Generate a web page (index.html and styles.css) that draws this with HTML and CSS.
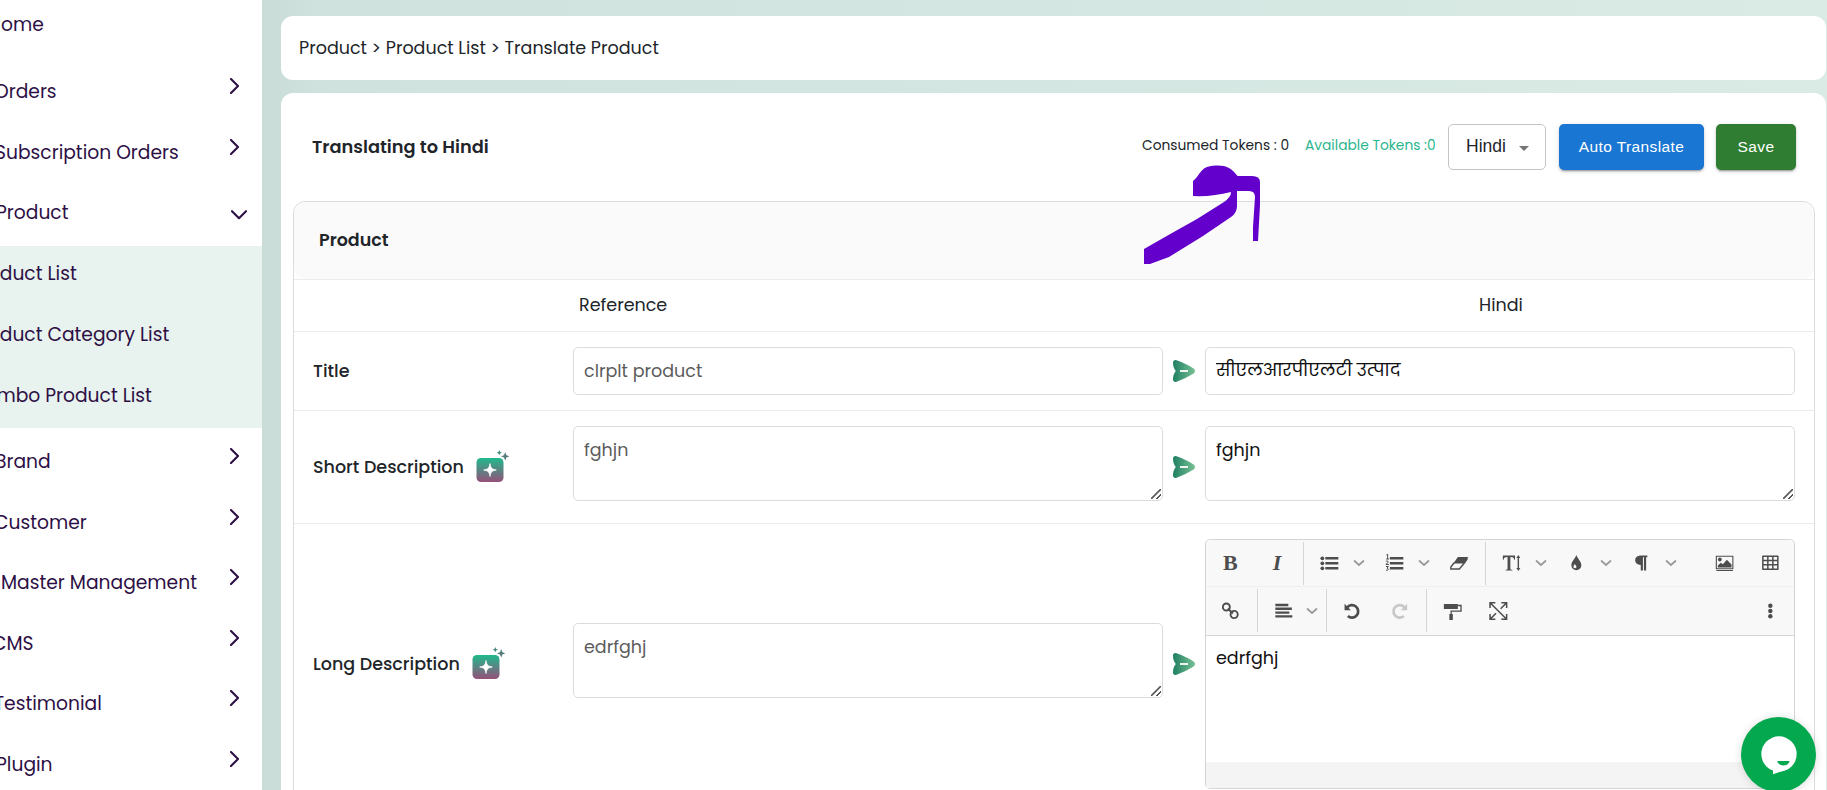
FILE: index.html
```html
<!DOCTYPE html>
<html lang="en">
<head>
  <meta charset="UTF-8" />
  <meta name="viewport" content="width=device-width, initial-scale=1" />
  <title>Translate Product</title>
  <link rel="stylesheet" href="styles.css">
</head>
<body>
  <!-- shared icons -->
  <svg class="sprite" width="0" height="0">
    <defs>
      <linearGradient id="sendFill" x1="0" y1="0" x2="1" y2="0">
        <stop offset="0" stop-color="#1f7f62" /><stop offset="1" stop-color="#78c195" />
      </linearGradient>
      <linearGradient id="aiFill" x1="0" y1="0" x2="0" y2="1">
        <stop offset="0" stop-color="#1fb98c" /><stop offset="1" stop-color="#95507a" />
      </linearGradient>
    </defs>
    <symbol id="right" viewBox="0 0 10 16"><path d="M1 1l7 7-7 7" fill="none" stroke="#2d0f45" stroke-width="2.1" stroke-linecap="round" stroke-linejoin="round" /></symbol>
    <symbol id="down" viewBox="0 0 16 10"><path d="M1 1.2l7 7 7-7" fill="none" stroke="#2d0f45" stroke-width="2.1" stroke-linecap="round" stroke-linejoin="round" /></symbol>
    <symbol id="caret" viewBox="0 0 12 8"><path d="M1 1.5l5 4.5 5-4.5" fill="none" stroke="#999" stroke-width="1.7" /></symbol>
    <symbol id="send" viewBox="0 0 22 22">
      <path d="M0 2.5C0 .6 1.6-.3 3.6.3 9 2.2 15 5 20.2 8.2c2.4 1.5 2.4 4.1 0 5.6C15 17 9 19.800 3.600 21.700 1.600 22.300 0 21.400 0 19.500 0 16.500.7 13.500 2.800 11 .7 8.500 0 5.500 0 2.500z" fill="url(#sendFill)" />
      <path d="M7 11h8" stroke="#fff" stroke-width="1.8" />
    </symbol>
    <symbol id="ai" viewBox="0 0 34 32">
      <rect x="0.5" y="8" width="27" height="24" rx="4.500" fill="url(#aiFill)" />
      <path d="M14 13.500c.8 4.500 1.600 5.500 6.300 6.500-4.700 1-5.500 2-6.300 6.500-.8-4.500-1.600-5.500-6.300-6.500 4.700-1 5.500-2 6.300-6.500z" fill="#fff" stroke="#fff" stroke-width=".7" />
      <path d="M23.300 0l.8 1.900 1.900.7-1.900.8-.8 1.900-.8-1.900-1.900-.8 1.900-.7z" fill="#41877a" />
      <path d="M29.200 2l1.200 3.300 3 1-3 1.100-1.200 3-1.200-3-3-1.100 3-1z" fill="#527d7a" />
    </symbol>
    <symbol id="ul" viewBox="0 0 24 24">
      <path d="M8 6h13v2.500H8zM8 11h13v2.500H8zM8 16h13v2.500H8z" />
      <circle cx="5" cy="7.300" r="1.900" /><circle cx="5" cy="12.300" r="1.900" /><circle cx="5" cy="17.300" r="1.900" />
    </symbol>
    <symbol id="ol" viewBox="0 0 24 24">
      <path d="M7.500 6h13.500v2.500H7.500zM7.500 11h13.500v2.500H7.500zM7.500 16h13.500v2.500H7.500z" />
      <path d="M4 4l1.300-.7V8M3.800 8h2.900M3.500 10.300c1-.6 2.500-.3 2.300.8L3.700 13.500h2.800M3.700 15.500h2.300l-1.300 1.700c2 0 1.600 2.700-1 2" fill="none" stroke="#4d4d4d" stroke-width="1" />
    </symbol>
    <symbol id="eraser" viewBox="0 0 24 24">
      <path d="M10.500 6H21l-4.500 6.500H6z" /><path d="M6.800 11.800L3.500 16v2H12l5-6M20 7.500l-3 4.500" fill="none" stroke="#4d4d4d" stroke-width="1.400" />
    </symbol>
    <symbol id="fontsize" viewBox="0 0 24 24">
      <path d="M3.500 4.500h12.200v4.200h-.8c-.4-2-1-2.700-3.900-2.700v11.400c0 1 .5 1.300 2 1.300v.8H6.200v-.8c1.500 0 2-.3 2-1.300V6C5.300 6 4.700 6.700 4.300 8.700h-.8z" />
      <path d="M19 6v12" stroke="#4d4d4d" stroke-width="1.400" /><path d="M19 4l2 3h-4zM19 20l2-3h-4z" />
    </symbol>
    <symbol id="drop" viewBox="0 0 24 24"><path fill-rule="evenodd" d="M12 4c1 3.500 5 6.300 5 10.300a5 4.900 0 0 1-10 0C7 10.300 11 7.500 12 4zm-1.500 9c-.7 1-1.400 1.800-1.400 2.700a1.500 1.500 0 0 0 3 0c0-.9-1.100-1.700-1.600-2.700z" /></symbol>
    <symbol id="para" viewBox="0 0 24 24"><path d="M18 4.500v1.700h-1.200V19.500h-2.200V6.200h-1V19.500h-2.200V14C4 14 4 4.500 11 4.500z" /></symbol>
    <symbol id="image" viewBox="0 0 24 24">
      <path d="M4 5.200h16.500v12.600H4zM4 19.500h16.500" fill="none" stroke="#4d4d4d" stroke-width="1.100" />
      <circle cx="7.500" cy="8.500" r="1.900" /><path d="M5.500 16.500v-2l3-2.800 2 1.500 4-4.500 4.700 4.800v3z" />
    </symbol>
    <symbol id="table" viewBox="0 0 24 24"><path d="M4.500 5.200h15v13h-15zM4.500 9.500h15M4.500 13.800h15M9.500 5.200v13M14.500 5.200v13" fill="none" stroke="#4d4d4d" stroke-width="1.500" stroke-linejoin="round" /></symbol>
    <symbol id="link" viewBox="0 0 24 24"><path d="M9.500 9.500l5 5" stroke="#4d4d4d" stroke-width="2" /><g fill="none" stroke="#4d4d4d" stroke-width="1.900"><circle cx="8" cy="8" r="3.500" /><circle cx="15.800" cy="15.500" r="3.600" /></g></symbol>
    <symbol id="align" viewBox="0 0 24 24"><path d="M4 4.800h13v2.400H4zM4 8.600h16.500v2.400H4zM4 12.400h14v2.400H4zM4 16.200h17v2.400H4z" /></symbol>
    <symbol id="undo" viewBox="0 0 24 24"><path d="M6.700 8.600a6.200 6.200 0 1 1 .8 8.400" fill="none" stroke="currentColor" stroke-width="2.700" /><path d="M4.200 4.800v6.400h6.400z" fill="currentColor" /></symbol>
    <symbol id="roller" viewBox="0 0 24 24"><path d="M3.500 5h14v5h-14zM9 15h3.500v6H9z" /><path d="M17.500 6.500h3.200v5.700H10.800V16" fill="none" stroke="#4d4d4d" stroke-width="1.300" /></symbol>
    <symbol id="full" viewBox="0 0 24 24"><path d="M3.700 9V3.700H9M15 3.700h5.300V9M20.300 15v5.300H15M9 20.300H3.700V15M3.700 3.700l16.600 16.600M20.300 3.700l-6 6M9.700 14.300l-6 6" fill="none" stroke="#4d4d4d" stroke-width="1.500" /></symbol>
    <symbol id="dots" viewBox="0 0 24 24"><circle cx="12" cy="6.700" r="2.200" /><circle cx="12" cy="12" r="2.200" /><circle cx="12" cy="17.300" r="2.200" /></symbol>
  </svg>

  <div class="layout">
    <aside class="sidebar">
      <a class="item home"><span class="t-home">Home</span></a>
      <a class="item"><span class="t-orders">Orders</span><svg class="chev"><use href="#right" /></svg></a>
      <a class="item"><span class="t-subs">Subscription Orders</span><svg class="chev"><use href="#right" /></svg></a>
      <a class="item"><span class="t-product">Product</span><svg class="chev-down"><use href="#down" /></svg></a>
      <div class="submenu">
        <a class="item"><span class="t-list">Product List</span></a>
        <a class="item"><span class="t-list">Product Category List</span></a>
        <a class="item"><span class="t-list">Combo Product List</span></a>
      </div>
      <a class="item"><span class="t-brand">Brand</span><svg class="chev"><use href="#right" /></svg></a>
      <a class="item"><span class="t-customer">Customer</span><svg class="chev"><use href="#right" /></svg></a>
      <a class="item"><span class="t-master">Master Management</span><svg class="chev"><use href="#right" /></svg></a>
      <a class="item"><span class="t-cms">CMS</span><svg class="chev"><use href="#right" /></svg></a>
      <a class="item"><span class="t-testimonial">Testimonial</span><svg class="chev"><use href="#right" /></svg></a>
      <a class="item"><span class="t-plugin">Plugin</span><svg class="chev"><use href="#right" /></svg></a>
    </aside>

    <main class="main">
      <nav class="breadcrumb">Product &gt; Product List &gt; Translate Product</nav>

      <section class="panel">
        <header class="panel-head">
          <h1>Translating to Hindi</h1>
          <span class="consumed">Consumed Tokens : 0</span>
          <span class="available">Available Tokens :0</span>
          <div class="select">Hindi<i></i></div>
          <button class="btn auto">Auto Translate</button>
          <button class="btn save">Save</button>
        </header>

        <div class="card">
          <h2>Product</h2>
          <div class="row row-head"><span></span><span class="ref">Reference</span><span></span><span class="lang">Hindi</span></div>

          <div class="row">
            <label>Title</label>
            <input type="text" value="clrplt product" class="muted" />
            <svg class="send"><use href="#send" /></svg>
            <input type="text" value="सीएलआरपीएलटी उत्पाद" class="hindi" />
          </div>

          <div class="row">
            <label>Short Description<svg class="ai"><use href="#ai" /></svg></label>
            <textarea class="muted">fghjn</textarea>
            <svg class="send"><use href="#send" /></svg>
            <textarea>fghjn</textarea>
          </div>

          <div class="row">
            <label>Long Description<svg class="ai"><use href="#ai" /></svg></label>
            <textarea class="muted">edrfghj</textarea>
            <svg class="send"><use href="#send" /></svg>
            <div class="editor">
              <div class="toolbar">
                <div class="tools">
                  <b class="tool glyph">B</b>
                  <i class="tool glyph">I</i>
                  <span class="sep"></span>
                  <svg class="tool"><use href="#ul" /></svg><svg class="caret"><use href="#caret" /></svg>
                  <svg class="tool"><use href="#ol" /></svg><svg class="caret"><use href="#caret" /></svg>
                  <svg class="tool"><use href="#eraser" /></svg>
                  <span class="sep"></span>
                  <svg class="tool"><use href="#fontsize" /></svg><svg class="caret"><use href="#caret" /></svg>
                  <svg class="tool"><use href="#drop" /></svg><svg class="caret"><use href="#caret" /></svg>
                  <svg class="tool"><use href="#para" /></svg><svg class="caret"><use href="#caret" /></svg>
                  <svg class="tool push"><use href="#image" /></svg>
                  <svg class="tool"><use href="#table" /></svg>
                </div>
                <div class="tools">
                  <svg class="tool"><use href="#link" /></svg>
                  <span class="sep"></span>
                  <svg class="tool"><use href="#align" /></svg><svg class="caret"><use href="#caret" /></svg>
                  <span class="sep after-caret"></span>
                  <svg class="tool"><use href="#undo" /></svg>
                  <svg class="tool redo"><use href="#undo" /></svg>
                  <span class="sep"></span>
                  <svg class="tool"><use href="#roller" /></svg>
                  <svg class="tool"><use href="#full" /></svg>
                  <svg class="tool push"><use href="#dots" /></svg>
                </div>
              </div>
              <div class="content">edrfghj</div>
              <div class="footer"></div>
            </div>
          </div>
        </div>
      </section>
    </main>
  </div>

  <!-- hand drawn arrow over the header -->
  <svg class="arrow" viewBox="0 0 120 102">
    <path d="M51 16C56 12 57 8 61 4.500C65 0 81-1 87 3C91 5 93 8 95.500 11H110Q118 11 118 17V40L116 76H111V62L113 32Q113 26 107 26H95V41Q95 48 89 52L61 71L27 92L8 99H2V84L30 68L55 54L82 37Q89 32 89 27Q70 32 51 31Z" fill="#6400cc" />
  </svg>

  <div class="chat">
    <svg viewBox="0 0 75 75">
      <circle cx="38" cy="37" r="17.700" fill="#fff" />
      <path d="M32 50v7.300q8-3 13-4.500z" fill="#fff" />
      <path d="M36.300 44h12.200c-1 6-11 6.200-12.200 0z" fill="#04a84f" />
    </svg>
  </div>
</body>
</html>
```

FILE: styles.css
```css
* { box-sizing: border-box; }
body {
  margin: 0; height: 790px; overflow: hidden;
  font-family: Poppins, Inter, "Noto Sans", sans-serif; font-size: 17.52px; color: #212529;
}
.sprite { position: absolute; }
.layout {
  display: flex; height: 790px; overflow: hidden;
  background: linear-gradient(90deg, #c9dcd8 262px, #cfe2de 320px, #daebe5 100%);
}

/* sidebar */
.sidebar { width: 262px; flex: none; background: #fff; overflow: hidden; color: #2d0f45; font-size: 18.7px; }
.item { display: flex; align-items: center; height: 60.6px; white-space: nowrap; }
.item span { padding-top: 1px; }
.item.home { height: 61px; padding-bottom: 13px; }
.chev { width: 10px; height: 16px; margin: 0 22px 10px auto; }
.chev-down { width: 16px; height: 10px; margin: 5px 15px 0 auto; }
.submenu { background: #e8f2ee; height: 182px; margin: 3px 0; }
.submenu .item { height: 61px; padding-bottom: 7px; }
.t-home { margin-left: -12px; }
.t-orders, .t-customer, .t-testimonial { margin-left: -6px; }
.t-subs, .t-brand { margin-left: -5px; }
.t-product, .t-plugin { margin-left: -4px; }
.t-list { margin-left: -30px; }
.t-master { margin-left: 1px; }
.t-cms { margin-left: -8px; }

/* content */
.main { flex: 1; padding: 16px 1px 0 19px; min-width: 0; }
.breadcrumb { height: 64px; line-height: 64px; padding-left: 18px; background: #fff; border-radius: 12px; }
.panel { margin-top: 13px; padding: 0 11px 0 12px; background: #fff; border-radius: 12px 12px 0 0; height: 720px; }
.panel-head { display: flex; align-items: center; height: 108px; padding-right: 19px; }
h1 { margin: 0 auto 1px 19px; font-size: 17.8px; font-weight: 600; }
.consumed, .available { font-size: 13.8px; margin-bottom: 3px; white-space: nowrap; }
.consumed { width: 148px; margin-right: 15px; }
.available { width: 131px; margin-right: 12px; color: #2bb68f; }
.select {
  display: flex; align-items: center; width: 98px; height: 46px; padding: 0 0 1px 17px;
  border: 1px solid #c4c4c4; border-radius: 5px; font: 17.5px "Liberation Sans", sans-serif;
}
.select i { margin: 3px 0 0 13px; border: 5px solid transparent; border-top-color: #757575; border-bottom: 0; }
.btn {
  height: 46px; border: 0; border-radius: 5px; color: #fff; padding: 0;
  font: 15.5px "Liberation Sans", sans-serif; letter-spacing: .4px;
  box-shadow: 0 3px 1px -2px rgba(0,0,0,.2), 0 2px 2px rgba(0,0,0,.14), 0 1px 5px rgba(0,0,0,.12);
}
.auto { width: 145px; margin: 0 12px 0 13px; background: #1976d2; }
.save { width: 80px; background: #2e7d32; }

.card { border: 1px solid #dcdcdc; border-radius: 12px 12px 0 0; height: 640px; }
h2 { margin: 0; height: 77px; line-height: 77px; padding-left: 25px; font-size: 17.5px; font-weight: 600; background: #fafafa; border-radius: 12px; }
.row {
  display: grid; grid-template-columns: 260px 590px 42px 590px; align-items: center;
  padding: 15px 19px; border-top: 1px solid #ececec;
}
.row-head { padding: 0 19px 1px; height: 52px; }
.ref { padding-left: 6px; }
.lang { text-align: center; padding-left: 2px; }
label { display: flex; align-items: center; font-weight: 500; white-space: nowrap; }
.ai { width: 34px; height: 32px; margin: 0 0 2px 12px; }
.send { width: 22px; height: 22px; margin-left: 10px; }
input, textarea {
  display: block; width: 100%; border: 1px solid #dcdcdc; border-radius: 5px;
  background: #fff; font: inherit; color: #111;
}
input { height: 48px; padding: 0 10px 1px; }
.hindi { padding-bottom: 2px; }
textarea {
  height: 75px; margin-bottom: 7px; padding: 11px 10px 9px; line-height: 25px; resize: none;
  background: linear-gradient(135deg, transparent 43%, #555 46% 54%, transparent 57% 71%, #555 74% 82%, transparent 85%) right 1px bottom 1px / 10px 10px no-repeat #fff;
}
.muted { color: #5c5c5c; }

/* rich text editor */
.editor { height: 250px; border: 1px solid #d5d5d5; border-radius: 5px; display: flex; flex-direction: column; }
.toolbar { background: #f8f8f8; border-bottom: 1px solid #d5d5d5; border-radius: 5px 5px 0 0; }
.tools { display: flex; align-items: center; height: 46px; padding-left: 1px; }
.tools + .tools { height: 49px; border-top: 1px solid #efefef; padding-bottom: 1px; }
.tool { flex: none; width: 46.7px; height: 24px; fill: #4d4d4d; color: #4d4d4d; }
.glyph { font: bold 22px/24px "Liberation Serif", serif; text-align: center; }
i.glyph { font-style: italic; }
.redo { color: #c8c8c8; transform: scaleX(-1); }
.sep { width: 1px; height: 43px; background: #d5d5d5; margin: 0 2px 0 3px; }
.sep.after-caret { margin-left: 2px; }
.caret { width: 12px; height: 8px; margin-right: 6px; }
.push { margin-left: auto; }
.content { flex: 1; padding: 10px; line-height: 25px; color: #111; }
.footer { height: 26px; background: #f4f4f4; }

.arrow { position: absolute; left: 1141.5px; top: 165px; width: 120px; height: 102px; }
.chat {
  position: absolute; left: 1741px; top: 717px; width: 75px; height: 75px;
  border-radius: 50%; background: #04a84f; box-shadow: 0 1px 8px rgba(0,0,0,.15);
}
```
